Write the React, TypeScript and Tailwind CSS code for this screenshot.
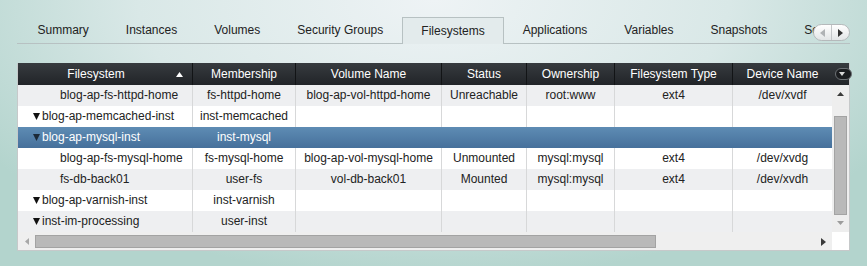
import React from 'react';

const TABS = ['Summary', 'Instances', 'Volumes', 'Security Groups', 'Filesystems', 'Applications', 'Variables', 'Snapshots', 'Scripts'];

const COLS = [
  { name: 'Filesystem', w: 'w-[175px]' },
  { name: 'Membership', w: 'w-[103px]' },
  { name: 'Volume Name', w: 'w-[146px]' },
  { name: 'Status', w: 'w-[85px]' },
  { name: 'Ownership', w: 'w-[88px]' },
  { name: 'Filesystem Type', w: 'w-[118px]' },
  { name: 'Device Name', w: 'w-[116px]' },
];

type Row = { cells: string[]; parent?: boolean; selected?: boolean };

const ROWS: Row[] = [
  { cells: ['blog-ap-fs-httpd-home', 'fs-httpd-home', 'blog-ap-vol-httpd-home', 'Unreachable', 'root:www', 'ext4', '/dev/xvdf'] },
  { cells: ['blog-ap-memcached-inst', 'inst-memcached', '', '', '', '', ''], parent: true },
  { cells: ['blog-ap-mysql-inst', 'inst-mysql', '', '', '', '', ''], parent: true, selected: true },
  { cells: ['blog-ap-fs-mysql-home', 'fs-mysql-home', 'blog-ap-vol-mysql-home', 'Unmounted', 'mysql:mysql', 'ext4', '/dev/xvdg'] },
  { cells: ['fs-db-back01', 'user-fs', 'vol-db-back01', 'Mounted', 'mysql:mysql', 'ext4', '/dev/xvdh'] },
  { cells: ['blog-ap-varnish-inst', 'inst-varnish', '', '', '', '', ''], parent: true },
  { cells: ['inst-im-processing', 'user-inst', '', '', '', '', ''], parent: true },
];

const BODY_W = ['w-[175px]', 'w-[103px]', 'w-[146px]', 'w-[85px]', 'w-[88px]', 'w-[118px]', 'w-[99px]'];

const Tri = ({ dir, color, w = 7, h = 6 }: { dir: 'up' | 'down' | 'left' | 'right'; color: string; w?: number; h?: number }) => {
  const pts =
    dir === 'up' ? `0,${h} ${w},${h} ${w / 2},0` :
    dir === 'down' ? `0,0 ${w},0 ${w / 2},${h}` :
    dir === 'left' ? `${w},0 ${w},${h} 0,${h / 2}` :
    `0,0 0,${h} ${w},${h / 2}`;
  return (
    <svg width={w} height={h} viewBox={`0 0 ${w} ${h}`} className="block">
      <polygon points={pts} fill={color} />
    </svg>
  );
};

const TabBar = () => (
  <div className="relative w-[833px] h-[27px] flex items-end">
    <div className="flex items-end w-full overflow-hidden">
      <div className="w-[2px] h-[27px] border-b border-[#b7c1c2] shrink-0" />
      {TABS.map((t) =>
        t === 'Filesystems' ? (
          <div key={t} className="shrink-0 h-[27px] px-[18.5px] border border-b-0 border-[#b7c1c2] bg-[#e3ebec] flex items-center">
            {t}
          </div>
        ) : (
          <div key={t} className="shrink-0 h-[27px] px-[18.5px] border-b border-[#b7c1c2] flex items-center">
            {t}
          </div>
        )
      )}
      <div className="flex-1 h-[27px] border-b border-[#b7c1c2]" />
    </div>
    <div className="absolute left-[796px] top-[7px] w-[37px] h-[17px] rounded-full border border-[#b5b9bb] bg-[linear-gradient(#ffffff,#e2e5e6)] flex overflow-hidden">
      <div className="flex-1 flex items-center justify-center border-r border-[#c3c6c8]">
        <Tri dir="left" color="#b0b3b5" w={5} h={8} />
      </div>
      <div className="flex-1 flex items-center justify-center">
        <Tri dir="right" color="#333" w={5} h={8} />
      </div>
    </div>
  </div>
);

const Header = () => (
  <div className="flex h-[22px] bg-[linear-gradient(#373b3f,#212428)] text-white">
    {COLS.map((c, i) => (
      <div
        key={c.name}
        className={`${c.w} shrink-0 relative flex items-center justify-center ${i < 6 ? 'border-r border-[#121416]' : ''} ${i === 0 ? 'pr-[18px]' : ''} ${i === 6 ? 'pr-[17px]' : ''}`}
      >
        {c.name}
        {i === 0 && (
          <span className="absolute right-[9px] top-[9px]">
            <Tri dir="up" color="#fff" w={7} h={5} />
          </span>
        )}
        {i === 6 && (
          <span className="absolute right-[-3px] top-[5px] w-[17px] h-[12px] rounded-full border border-[#6c7074] bg-[#1b1d20] flex items-center justify-center pr-[3px]">
            <Tri dir="down" color="#d8d8d8" w={6} h={4} />
          </span>
        )}
      </div>
    ))}
  </div>
);

const Body = () => (
  <div className="flex">
    <div>
      {ROWS.map((r, ri) => {
        const bg = r.selected
          ? 'bg-[linear-gradient(#5e8cb4,#46709b)] text-white'
          : ri % 2 === 0
          ? 'bg-[#eeeff1] text-[#222]'
          : 'bg-white text-[#222]';
        const line = r.selected ? 'border-transparent' : 'border-[#d7d8d9]';
        return (
          <div key={ri} className={`flex h-[21px] ${bg}`}>
            {r.cells.map((c, ci) => (
              <div
                key={ci}
                className={`${BODY_W[ci]} shrink-0 h-[21px] leading-[21px] whitespace-nowrap ${ci < 6 ? `border-r ${line}` : ''} ${ci === 0 ? 'text-left' : 'text-center'}`}
              >
                {ci === 0 ? (
                  r.parent ? (
                    <span className="flex items-center pl-[15px]">
                      <span className="mr-[2px]">
                        <Tri dir="down" color={r.selected ? '#1c2a38' : '#111'} w={7} h={7} />
                      </span>
                      {c}
                    </span>
                  ) : (
                    <span className="pl-[42px]">{c}</span>
                  )
                ) : (
                  c
                )}
              </div>
            ))}
          </div>
        );
      })}
    </div>
    <div className="w-[17px] h-[147px] bg-[#eeeeee] flex flex-col items-center">
      <div className="h-[31px] pt-[7px]">
        <Tri dir="up" color="#3a3a3a" w={7} h={4} />
      </div>
      <div className="w-[13px] h-[99px] bg-[#b9b9b9] border border-[#a3a3a3]" />
      <div className="pt-[6px]">
        <Tri dir="down" color="#9c9c9c" w={7} h={4} />
      </div>
    </div>
  </div>
);

const HScroll = () => (
  <div className="flex h-[18px]">
    <div className="w-[814px] h-[18px] bg-[#efefef] flex items-center">
      <div className="w-[17px] flex justify-center">
        <Tri dir="left" color="#a8a8a8" w={4} h={7} />
      </div>
      <div className="w-[621px] h-[13px] mt-[1px] bg-[#b9b9b9] border border-[#a3a3a3]" />
      <div className="flex-1" />
      <div className="w-[18px] flex justify-center mt-[2px]">
        <Tri dir="right" color="#3a3a3a" w={5} h={8} />
      </div>
    </div>
    <div className="w-[17px] h-[18px] bg-white" />
  </div>
);

export default function App() {
  return (
    <div className="w-[867px] h-[266px] overflow-hidden pt-[17px] pl-[17px] text-[12px] text-[#222] font-['Liberation_Sans',Arial,sans-serif] bg-[radial-gradient(ellipse_62%_105%_at_50%_0%,#eef3f5_0%,#d9e8e7_55%,#b3d4cd_100%)]">
      <TabBar />
      <div className="mt-[19px] w-[833px] border-x border-b border-[#c6c9ca] bg-white">
        <Header />
        <Body />
        <HScroll />
      </div>
    </div>
  );
}
